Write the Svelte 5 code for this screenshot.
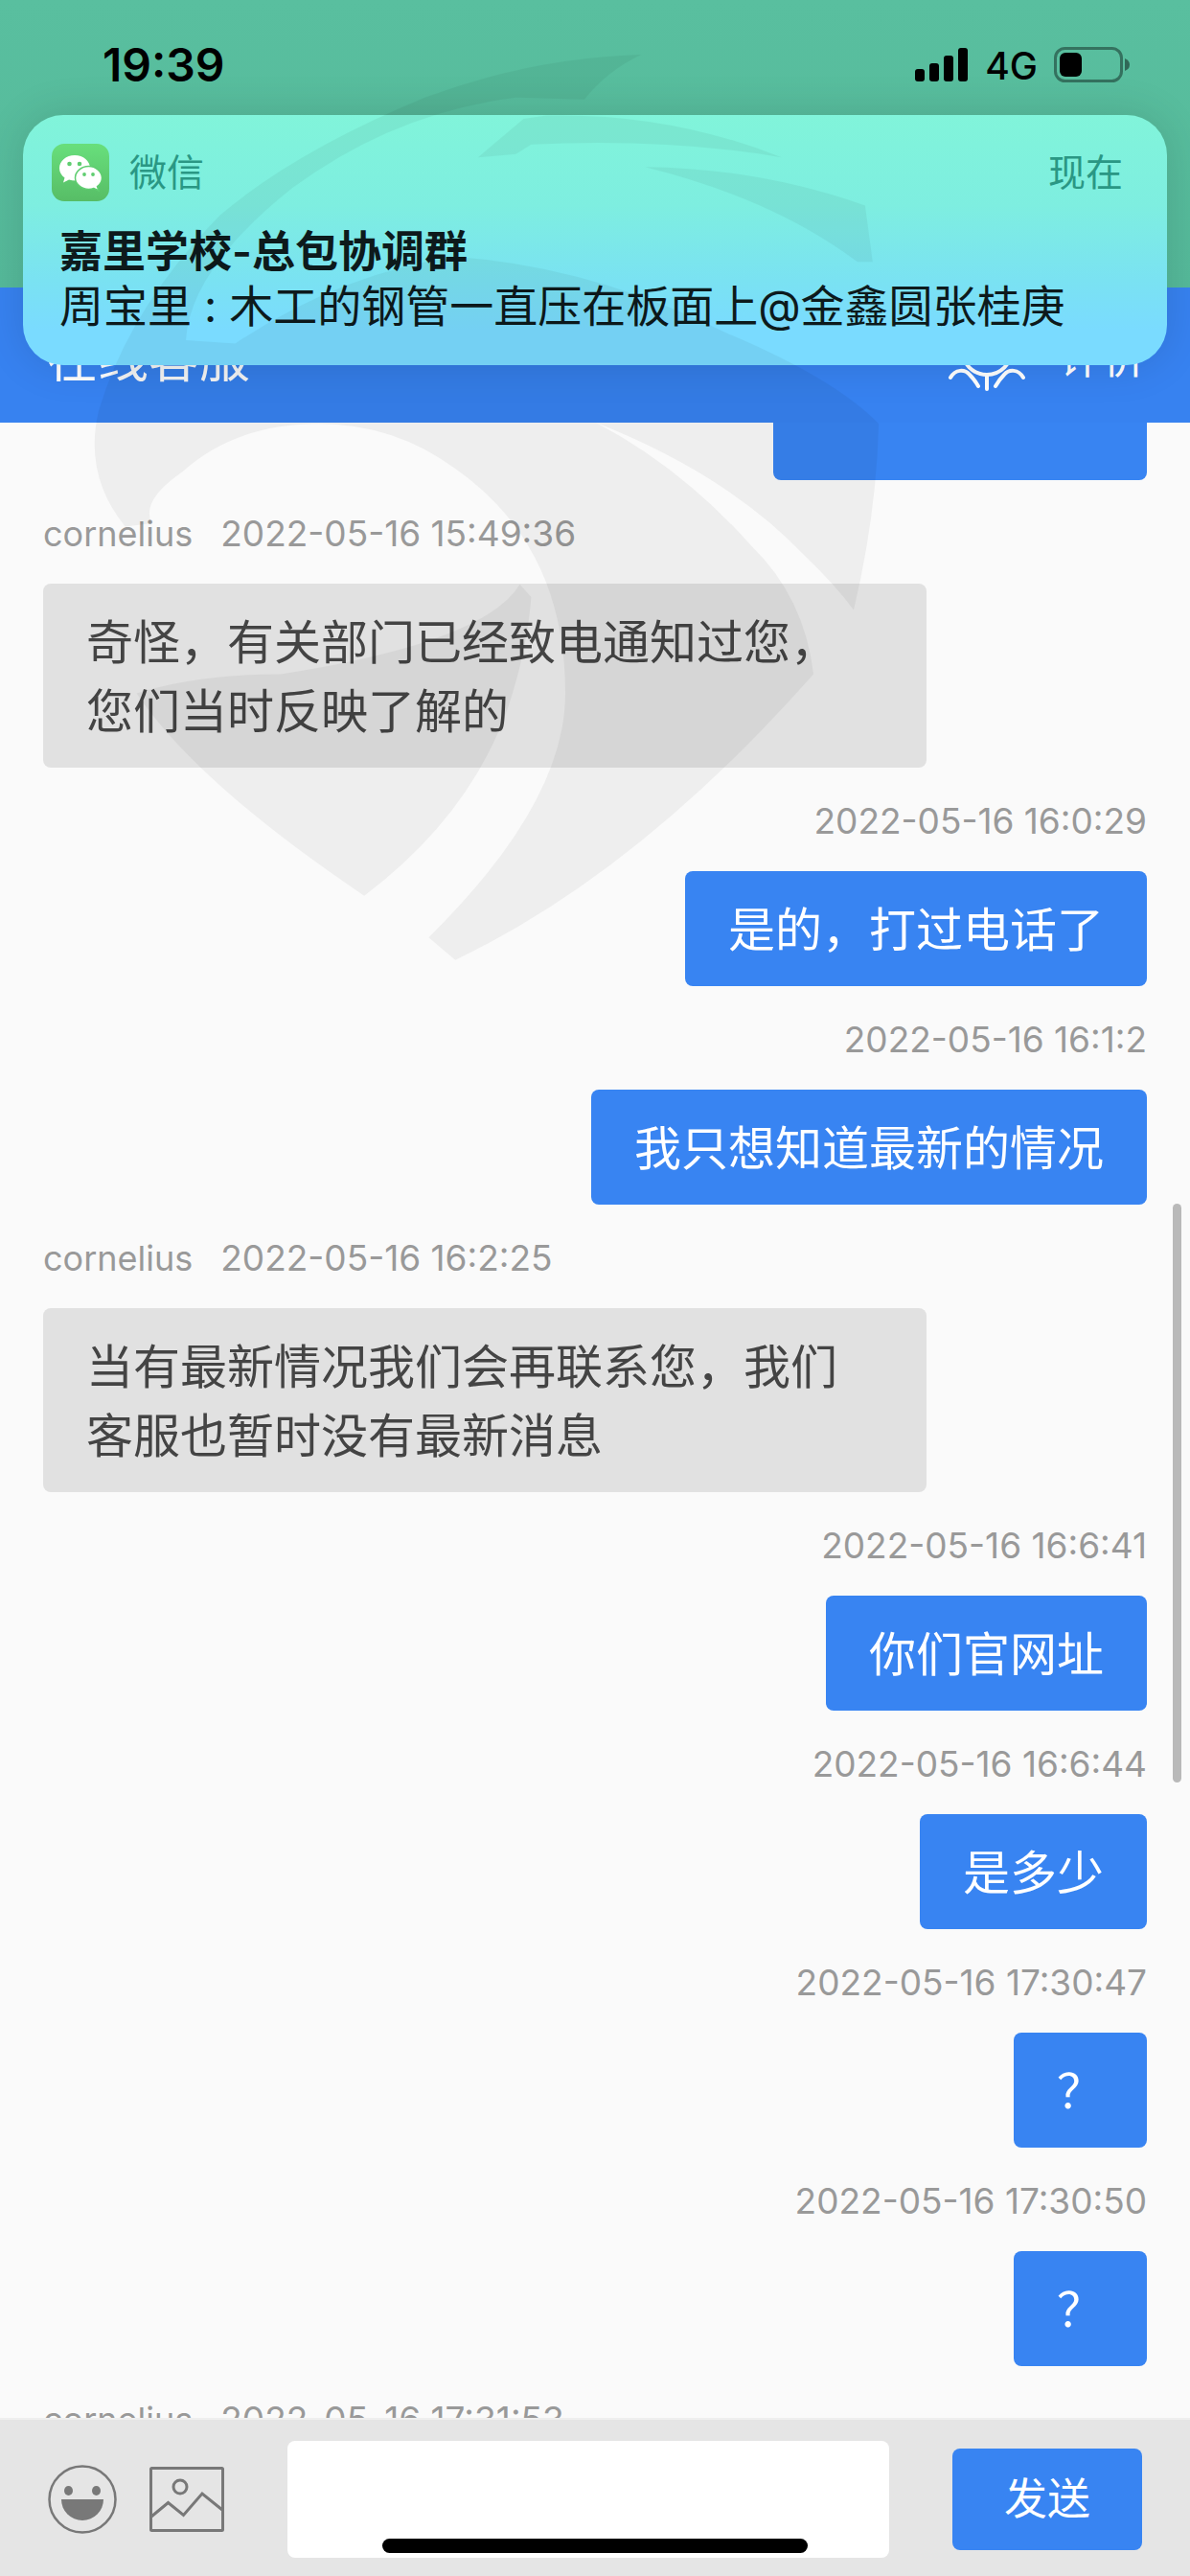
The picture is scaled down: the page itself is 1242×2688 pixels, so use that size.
<script lang="ts">
    type Message = { time: string; text: string; from?: string };

    const messages: Message[] = [
        { from: 'cornelius', time: '2022-05-16 15:49:36', text: '奇怪，有关部门已经致电通知过您，您们当时反映了解的' },
        { time: '2022-05-16 16:0:29', text: '是的，打过电话了' },
        { time: '2022-05-16 16:1:2', text: '我只想知道最新的情况' },
        { from: 'cornelius', time: '2022-05-16 16:2:25', text: '当有最新情况我们会再联系您，我们客服也暂时没有最新消息' },
        { time: '2022-05-16 16:6:41', text: '你们官网址' },
        { time: '2022-05-16 16:6:44', text: '是多少' },
        { time: '2022-05-16 17:30:47', text: '？' },
        { time: '2022-05-16 17:30:50', text: '？' },
        { from: 'cornelius', time: '2022-05-16 17:31:53', text: '' }
    ];

    let draft = $state('');
</script>

<div class="screen">
    <header class="status">
        <span class="clock">19:39</span>
        <div class="indicators">
            <svg class="signal" viewBox="0 0 56 36" aria-hidden="true">
                <rect x="0" y="22" width="10" height="13" rx="3" />
                <rect x="15" y="16" width="10" height="19" rx="3" />
                <rect x="30" y="8" width="10" height="27" rx="3" />
                <rect x="45" y="0" width="10" height="35" rx="3" />
            </svg>
            <span class="network">4G</span>
            <svg class="battery" viewBox="0 0 80 38" aria-hidden="true">
                <rect x="1.5" y="1.5" width="69" height="34" rx="10" fill="none" stroke="#000" stroke-opacity=".4" stroke-width="3" />
                <rect x="6" y="6" width="23" height="25" rx="6" />
                <path d="M74 12q5 2 5 6.500t-5 6.500z" fill-opacity=".45" />
            </svg>
        </div>
    </header>

    <nav class="topbar">
        <h1>在线客服</h1>
        <button class="icon-button" aria-label="服务">
            <svg class="flower" viewBox="0 0 84 76" fill="none" stroke="#fff" stroke-width="4" stroke-linecap="round">
                <circle cx="42" cy="32" r="26" />
                <path d="M42 59v14M4 61c5-9 15-9 20-3q5 5 9 12M80 61c-5-9-15-9-20-3q-5 5-9 12" />
            </svg>
        </button>
        <button class="rate">评价</button>
    </nav>

    <main class="messages">
        <div class="bubble mine clipped"></div>
        {#each messages as m}
            <div class="meta" class:mine={!m.from}>
                {#if m.from}<span>{m.from}</span>{/if}
                <time>{m.time}</time>
            </div>
            {#if m.text}
                <div class="bubble" class:mine={!m.from}>{m.text}</div>
            {/if}
        {/each}
        <div class="thumb"></div>
    </main>

    <form class="composer" onsubmit={(e) => e.preventDefault()}>
        <button type="button" class="icon-button" aria-label="表情">
            <svg class="smile" viewBox="0 0 72 72" fill="#787878">
                <circle cx="36" cy="36" r="34.500" fill="none" stroke="#787878" stroke-width="2.500" />
                <ellipse cx="21.500" cy="27" rx="4.500" ry="5" />
                <ellipse cx="50.500" cy="27" rx="4.500" ry="5" />
                <path d="M14 36h44a22 22 0 0 1-44 0z" />
            </svg>
        </button>
        <button type="button" class="icon-button" aria-label="图片">
            <svg class="photo" viewBox="0 0 78 68" fill="none" stroke="#787878" stroke-width="3">
                <rect x="1.500" y="1.500" width="75" height="65" rx="1" />
                <circle cx="32" cy="21" r="7" />
                <path d="M2 52L19.500 37.500L35.500 50.500L55 28L76 45" />
            </svg>
        </button>
        <input bind:value={draft} aria-label="输入消息" />
        <button class="send">发送</button>
    </form>

    <section class="notice">
        <div class="notice-head">
            <svg class="app" viewBox="0 0 60 60" aria-hidden="true">
                <defs>
                    <linearGradient id="app-green" x2="0" y2="1">
                        <stop stop-color="#68df7c" />
                        <stop offset="1" stop-color="#57bd66" />
                    </linearGradient>
                </defs>
                <rect width="60" height="60" rx="13" fill="url(#app-green)" />
                <path fill="#fff" d="M24 12c-9 0-16 6-16 13.500 0 4 2 7.500 5.500 10L12 40.500l6-3q3 1 7 1C33 38.500 40 33 40 25.500S33 12 24 12z" />
                <path fill="#fff" stroke="#5fcd70" stroke-width="1.500" d="M38.500 23.500C31 23.500 24.500 29 24.500 35.500S31 47.500 38.500 47.500q3 0 5.500-1l5 2.500-1.500-4.500c3-2 5-5.500 5-9C52.500 29 46 23.500 38.500 23.500z" />
                <g fill="#5fcd70">
                    <circle cx="18.500" cy="21" r="2.300" />
                    <circle cx="29" cy="21" r="2.300" />
                    <circle cx="34" cy="32" r="1.900" />
                    <circle cx="43" cy="32" r="1.900" />
                </g>
            </svg>
            <span class="app-name">微信</span>
            <span class="when">现在</span>
        </div>
        <strong>嘉里学校-总包协调群</strong>
        <p>周宝里 : 木工的钢管一直压在板面上@金鑫圆张桂庚</p>
    </section>

    <svg class="watermark" viewBox="0 0 1242 1050" aria-hidden="true">
        <g transform="scale(.792 .67)">
            <path d="M845 85Q700 90 560 152Q390 235 290 335Q170 480 130 640Q110 740 165 820L200 815Q185 780 240 735Q310 660 420 660Q520 660 600 730Q745 850 745 1080Q745 1250 565 1460L600 1495Q840 1360 1072 1050Q1060 930 990 850Q900 730 785 658Q960 740 1060 865Q1100 910 1125 950Q1155 800 1158 660Q1100 590 960 520Q780 415 600 400Q450 425 310 535L245 530Q250 420 385 293Q520 175 680 152L770 155Q800 110 845 85z" />
            <path d="M630 245L690 185 720 180Q880 175 1030 245Q880 215 700 225L680 240z" />
            <path d="M850 260Q1000 262 1140 320L1150 408 1130 408Q1020 310 850 260z" />
            <path d="M685 910Q640 1000 370 1050Q260 1050 180 1080Q260 1220 480 1395Q620 1270 670 1100Q695 1010 700 930z" />
        </g>
    </svg>
    <div class="home"></div>
</div>

<style>
    :global(body) { margin: 0; }
    .screen {
        position: relative;
        display: flex;
        flex-direction: column;
        height: 100vh;
        overflow: hidden;
        background: #fafafa;
        font-family: Inter, 'Noto Sans CJK SC', sans-serif;
    }
    button {
        padding: 0;
        border: none;
        background: none;
        font-family: inherit;
        color: #fff;
    }
    svg { display: block; }
    .status {
        display: flex;
        flex: none;
        align-items: flex-start;
        justify-content: space-between;
        box-sizing: border-box;
        height: 300px;
        padding: 38px 62px 0 107px;
        background: linear-gradient(#59bf9f, #55b99a);
    }
    .clock { font-size: 48px; font-weight: 600; line-height: 60px; }
    .indicators { display: flex; align-items: center; gap: 17px; height: 60px; }
    .signal { width: 56px; height: 36px; }
    .network { font-size: 39px; font-weight: 500; }
    .battery { width: 80px; height: 38px; }
    .topbar {
        display: flex;
        flex: none;
        align-items: center;
        gap: 34px;
        height: 141px;
        padding: 0 46px 0 49px;
        background: #3782f0;
        color: #fff;
    }
    .topbar h1 { flex: 1; margin: 0; font-size: 53px; font-weight: 400; }
    .flower { width: 84px; height: 76px; }
    .rate { font-size: 45px; }
    .messages {
        position: relative;
        display: flex;
        flex: 1;
        flex-direction: column;
        align-items: flex-start;
        min-height: 0;
        padding: 0 45px;
        overflow: hidden;
    }
    .meta {
        display: flex;
        flex: none;
        gap: 29px;
        height: 108px;
        color: #999;
        font-size: 36px;
        line-height: 112px;
    }
    .meta time { font-size: 37px; }
    .bubble {
        flex: none;
        box-sizing: border-box;
        max-width: 80%;
        padding: 26px 45px 22px;
        border-radius: 8px;
        background: #e1e1e1;
        color: #444;
        font-size: 49px;
        line-height: 72px;
    }
    .mine { align-self: flex-end; }
    .bubble.mine { background: #3884f2; color: #fff; }
    .bubble.clipped {
        width: 390px;
        height: 60px;
        border-radius: 0 0 8px 8px;
    }
    .thumb {
        position: absolute;
        top: 815px;
        right: 9px;
        width: 9px;
        height: 604px;
        border-radius: 5px;
        background: #b9b9b9;
    }
    .composer {
        display: flex;
        flex: none;
        align-items: center;
        box-sizing: border-box;
        height: 165px;
        padding: 2px 50px 0;
        border-top: 2px solid #efefef;
        background: #e5e5e5;
    }
    .smile { width: 72px; height: 72px; }
    .photo { width: 78px; height: 68px; margin-left: 34px; }
    .composer input {
        flex: 1;
        box-sizing: border-box;
        min-width: 0;
        height: 122px;
        margin: 0 66px;
        padding: 0 24px;
        border: none;
        border-radius: 8px;
        outline: none;
        background: #fff;
        font: inherit;
        font-size: 45px;
    }
    .send {
        width: 198px;
        height: 106px;
        border-radius: 8px;
        background: #3884f2;
        font-size: 45px;
        line-height: 102px;
    }
    .notice {
        position: absolute;
        top: 120px;
        right: 24px;
        left: 24px;
        box-sizing: border-box;
        height: 261px;
        padding: 30px 38px 0;
        border-radius: 42px;
        background: linear-gradient(#81f4da, #7eeee0 36%, #7ae2f2 66%, #7adbff 86%);
        box-shadow: 0 0 45px rgba(0, 0, 0, .12);
        color: #0d1a1c;
    }
    .notice-head {
        display: flex;
        align-items: center;
        height: 60px;
        margin: 0 8px 24px -8px;
        color: #2a9784;
        font-size: 39px;
        line-height: 56px;
    }
    .app { width: 60px; height: 60px; }
    .app-name { flex: 1; margin-left: 21px; }
    .notice strong, .notice p {
        display: block;
        margin: 0;
        font-size: 46px;
        line-height: 57px;
        white-space: nowrap;
    }
    .notice strong { font-size: 45px; font-weight: 600; }
    .watermark {
        position: absolute;
        top: 0;
        left: 0;
        width: 100%;
        fill: #000;
        opacity: .045;
        pointer-events: none;
    }
    .home {
        position: absolute;
        right: 399px;
        bottom: 24px;
        left: 399px;
        height: 15px;
        border-radius: 8px;
        background: #000;
    }
</style>
